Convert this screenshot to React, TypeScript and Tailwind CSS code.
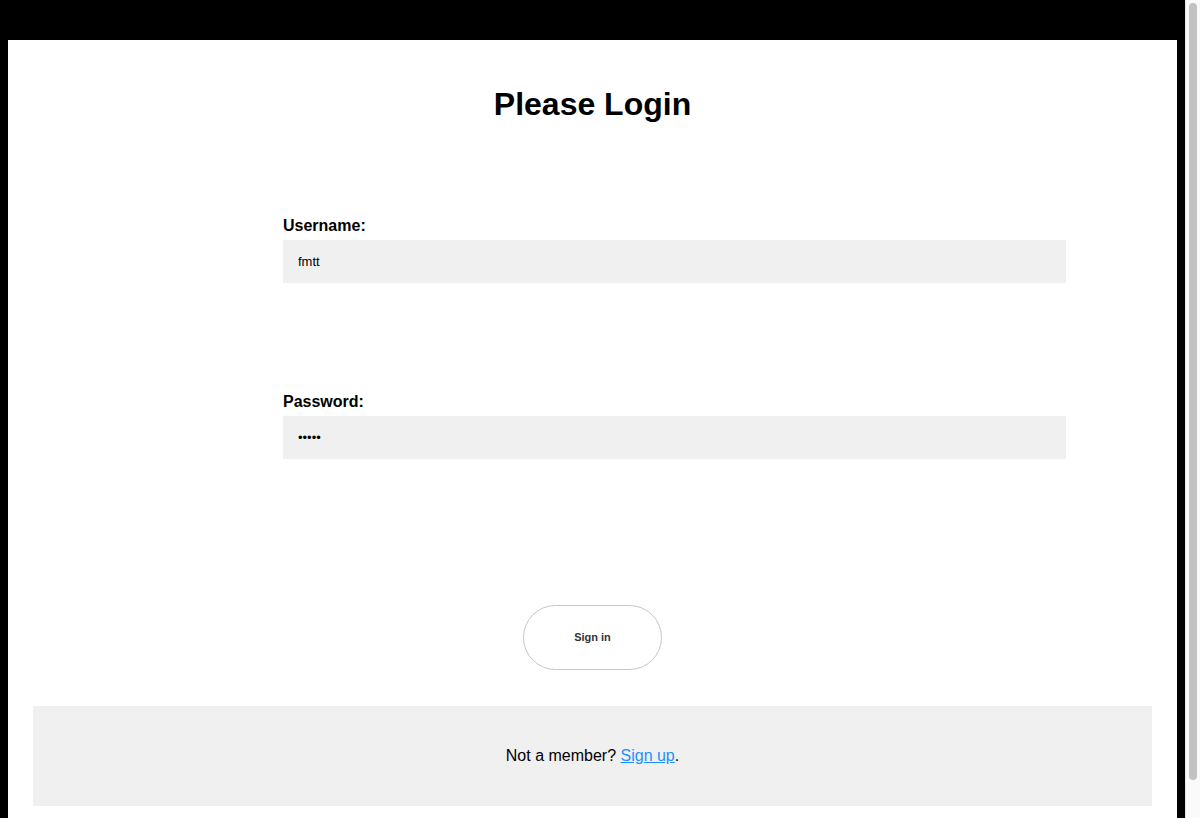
import React from 'react';

const Field: React.FC<{ label: string; type: string; value: string; className?: string }> = ({
  label,
  type,
  value,
  className = '',
}) => (
  <div className={`flex flex-col ${className}`}>
    <label className="text-[16px] font-bold leading-[18px] text-black">{label}</label>
    <input
      type={type}
      defaultValue={value}
      readOnly
      className="mt-[5px] h-[43px] w-[783px] bg-[#f0f0f0] px-[15px] text-[13px] text-black outline-none font-['Liberation_Sans',Arial,sans-serif]"
    />
  </div>
);

export default function App() {
  return (
    <div className="flex min-h-[900px] bg-black font-['Liberation_Sans',Arial,sans-serif]">
      <main className="flex-1 px-2 pt-10 pb-10">
        <div className="flex flex-col bg-white pb-6">
          <h1 className="mt-[46px] text-center text-[32px] font-bold leading-[37px] text-black">Please Login</h1>

          <form className="ml-[275px] flex flex-col" onSubmit={(e) => e.preventDefault()}>
            <Field label="Username:" type="text" value="fmtt" className="mt-[94px]" />
            <Field label="Password:" type="password" value="12345" className="mt-[110px]" />
          </form>

          <div className="mt-[146px] flex justify-center">
            <button
              type="button"
              className="h-[65px] w-[139px] rounded-full border border-[#c6c6c6] bg-white text-[11px] font-bold text-[#333]"
            >
              Sign in
            </button>
          </div>

          <div className="mx-[25px] mt-[36px] flex h-[100px] items-center justify-center bg-[#f0f0f0] text-[16px] text-black">
            <p>
              Not a member?{' '}
              <a href="#" className="text-[#1e8fff] underline">
                Sign up
              </a>
              .
            </p>
          </div>
        </div>
      </main>

      {/* page scrollbar as in the screenshot */}
      <aside className="w-[15px] shrink-0 border-l border-[#e6e6e6] bg-[#fafafa]">
        <div className="mx-auto mt-[3px] h-[777px] w-[8px] rounded-full bg-[#c2c2c2]" />
      </aside>
    </div>
  );
}
